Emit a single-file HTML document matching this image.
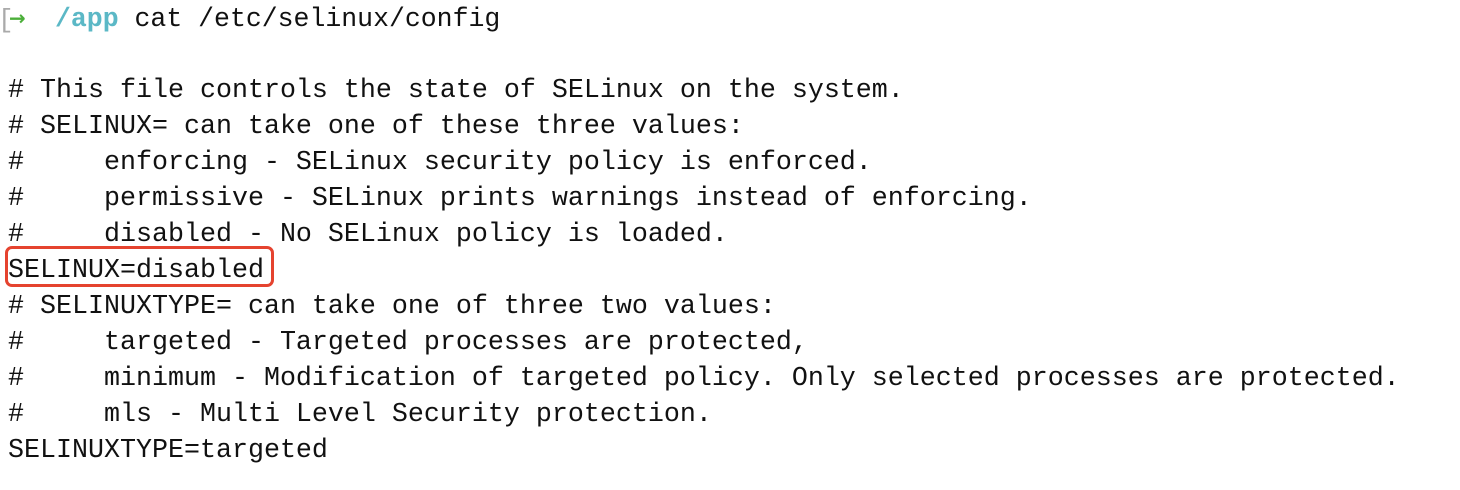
<!DOCTYPE html>
<html><head><meta charset="utf-8"><style>
html,body{margin:0;padding:0;background:#fff;width:1460px;height:490px;overflow:hidden}
.t{position:absolute;left:8px;top:2px;font-family:"Liberation Mono",monospace;font-size:26.67px;line-height:36px;color:#111;white-space:pre}
.b{position:absolute;left:5px;top:246px;width:263px;height:35px;border:3.5px solid #e5432f;border-radius:7px}
.g{position:absolute;left:9px;top:3px;color:#4caf3a;font-family:"DejaVu Sans",sans-serif;font-size:20px;font-weight:bold;line-height:30px}
.c{color:#5bb8c6;font-weight:bold}
.gr{position:absolute;left:-2px;top:2px;color:#aaa;font-family:"Liberation Mono",monospace;font-size:26px;line-height:36px}
</style></head><body>
<div class="b"></div>
<span class="gr">[</span><span class="g">→</span>
<div class="t" style="left:55px;top:1px;font-size:26.5px"><span class="c">/app</span> cat /etc/selinux/config</div>
<div class="t" style="top:72.5px"># This file controls the state of SELinux on the system.
# SELINUX= can take one of these three values:
#     enforcing - SELinux security policy is enforced.
#     permissive - SELinux prints warnings instead of enforcing.
#     disabled - No SELinux policy is loaded.
SELINUX=disabled
# SELINUXTYPE= can take one of three two values:
#     targeted - Targeted processes are protected,
#     minimum - Modification of targeted policy. Only selected processes are protected.
#     mls - Multi Level Security protection.
SELINUXTYPE=targeted</div>
</body></html>
